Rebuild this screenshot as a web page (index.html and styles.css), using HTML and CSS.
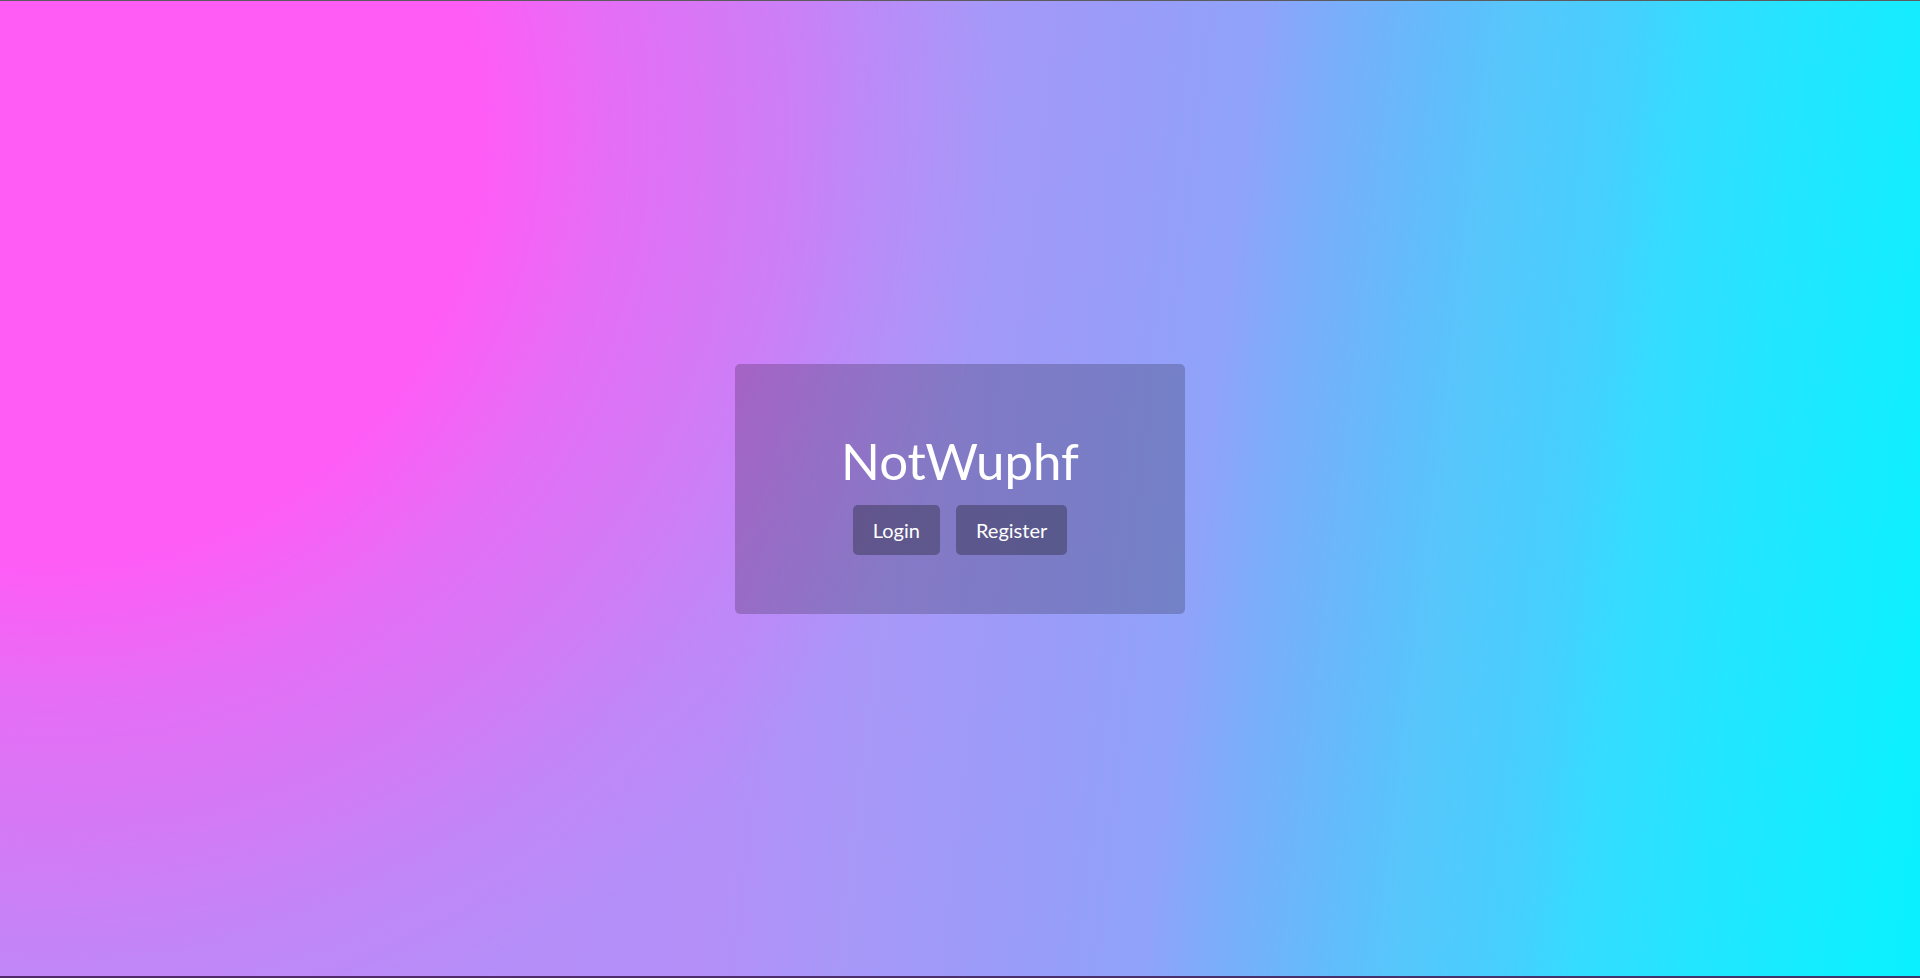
FILE: index.html
```html
<!DOCTYPE html>
<html lang="en">
<head>
<meta charset="utf-8">
<title>NotWuphf</title>
<link rel="stylesheet" href="styles.css">
</head>
<body>
<div class="page">
  <main class="card">
    <h1 class="title">NotWuphf</h1>
    <div class="actions">
      <a class="btn" href="#">Login</a>
      <a class="btn" href="#">Register</a>
    </div>
  </main>
</div>
</body>
</html>
```

FILE: styles.css
```css
html, body {
  margin: 0;
  padding: 0;
  height: 100%;
}

body {
  font-family: "Lato", "Open Sans", "Liberation Sans", sans-serif;
  color: #fff;
}

.page {
  box-sizing: border-box;
  height: 100vh;
  display: flex;
  align-items: center;
  justify-content: center;
  border-top: 1px solid #5c5c5c;
  border-bottom: 2px solid rgba(64, 37, 93, 0.91);
  background:
    radial-gradient(circle at 50px 130px,
      rgba(255, 92, 245, 1) 0px,
      rgba(255, 92, 245, 1) 430px,
      rgba(255, 92, 245, 0.65) 560px,
      rgba(255, 92, 245, 0.4) 700px,
      rgba(255, 92, 245, 0.16) 820px,
      rgba(255, 92, 245, 0) 950px),
    linear-gradient(97deg,
      #b98cf7 0%,
      #b48ff8 40%,
      #a898f8 47%,
      #9b9bf8 54.5%,
      #8fa3f9 62%,
      #7dacfa 65%,
      #62bcfb 70.9%,
      #57c6fb 74.1%,
      #45d0fd 80%,
      #35dcff 83.1%,
      #22e6ff 89%,
      #0cf0ff 98%,
      #0af0ff 100%);
}

.card {
  box-sizing: border-box;
  width: 450px;
  height: 250px;
  padding: 67px 0 59px;
  border-radius: 5px;
  background: rgba(0, 0, 0, 0.2);
  display: flex;
  flex-direction: column;
  align-items: center;
}

.title {
  margin: 0 0 14px;
  font-size: 51px;
  line-height: 60px;
  font-weight: 400;
}

.actions {
  display: flex;
  gap: 16px;
}

.btn {
  box-sizing: border-box;
  height: 50px;
  padding: 0 20px;
  display: flex;
  align-items: center;
  border-radius: 5px;
  background: rgba(55, 53, 84, 0.5);
  color: #fff;
  font-size: 20px;
  text-decoration: none;
}
```
